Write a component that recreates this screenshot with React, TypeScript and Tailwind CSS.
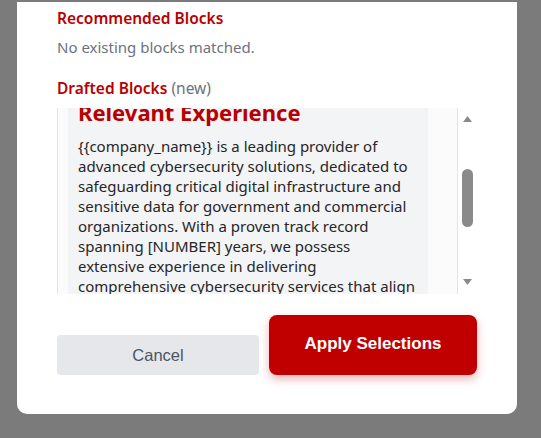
import React from "react";

const lines = [
  "{{company_name}} is a leading provider of",
  "advanced cybersecurity solutions, dedicated to",
  "safeguarding critical digital infrastructure and",
  "sensitive data for government and commercial",
  "organizations. With a proven track record",
  "spanning [NUMBER] years, we possess",
  "extensive experience in delivering",
  "comprehensive cybersecurity services that align",
  "with the stringent requirements of federal",
  "agencies and private enterprises.",
];

function FakeScrollbar() {
  return (
    <div className="relative w-[20px] border-l border-[#e3e3e3] bg-white">
      {/* up arrow */}
      <svg className="absolute left-[5px] top-[8px]" width="9" height="6" viewBox="0 0 9 6">
        <path d="M4.5 0 L9 6 L0 6 Z" fill="#8a8a8a" />
      </svg>
      {/* thumb */}
      <div className="absolute left-[4px] top-[61px] h-[58px] w-[11px] rounded-full bg-[#8a8a8a]" />
      {/* down arrow */}
      <svg className="absolute left-[5px] bottom-[9px]" width="9" height="6" viewBox="0 0 9 6">
        <path d="M0 0 L9 0 L4.5 6 Z" fill="#8a8a8a" />
      </svg>
    </div>
  );
}

export default function App() {
  return (
    <div className="flex h-[438px] w-full flex-col justify-end overflow-hidden bg-[#7b7b7b] pb-[24px] pl-[17px]">
      <div className="w-[500px] rounded-b-[10px] bg-white px-[40px] pb-[39px] pt-[5px] font-['Noto_Sans',sans-serif]">
        <h3 className="text-[15.5px] font-semibold leading-[22px] text-[#b80000]">
          Recommended Blocks
        </h3>
        <p className="mt-[8px] text-[15px] leading-[20px] text-[#6b7280]">
          No existing blocks matched.
        </p>

        <h3 className="mt-[20px] text-[15.5px] leading-[22px] text-[#6b7280]">
          <span className="font-semibold text-[#b80000]">Drafted Blocks</span> (new)
        </h3>

        <div className="mt-[9px] flex h-[186px] border-l border-[#e3e3e3] bg-[#fbfbfb]">
          <div className="flex-1 overflow-hidden pl-[10px] pr-[29px]">
            <div className="-mt-[10px] bg-[#f3f4f6] px-[10px] pb-[12px]">
              <h2 className="text-[22px] font-bold leading-[28px] text-[#b80000]">
                Relevant Experience
              </h2>
              <div className="mt-[10px] text-[15px] leading-[20px] text-[#262626]">
                {lines.map((l) => (
                  <span key={l} className="block whitespace-nowrap">
                    {l}
                  </span>
                ))}
              </div>
            </div>
          </div>
          <FakeScrollbar />
        </div>

        <div className="mt-[21px] flex items-end gap-[10px] font-['Liberation_Sans',Arial,sans-serif]">
          <button className="h-[40px] w-[202px] rounded-[4px] bg-[#e5e7eb] text-[16.5px] text-[#4b5563]">
            Cancel
          </button>
          <button className="h-[60px] w-[208px] rounded-[8px] bg-[#c00000] pb-[2px] text-[17px] font-bold text-white shadow-[0_4px_10px_rgba(192,0,0,0.3)]">
            Apply Selections
          </button>
        </div>
      </div>
    </div>
  );
}
